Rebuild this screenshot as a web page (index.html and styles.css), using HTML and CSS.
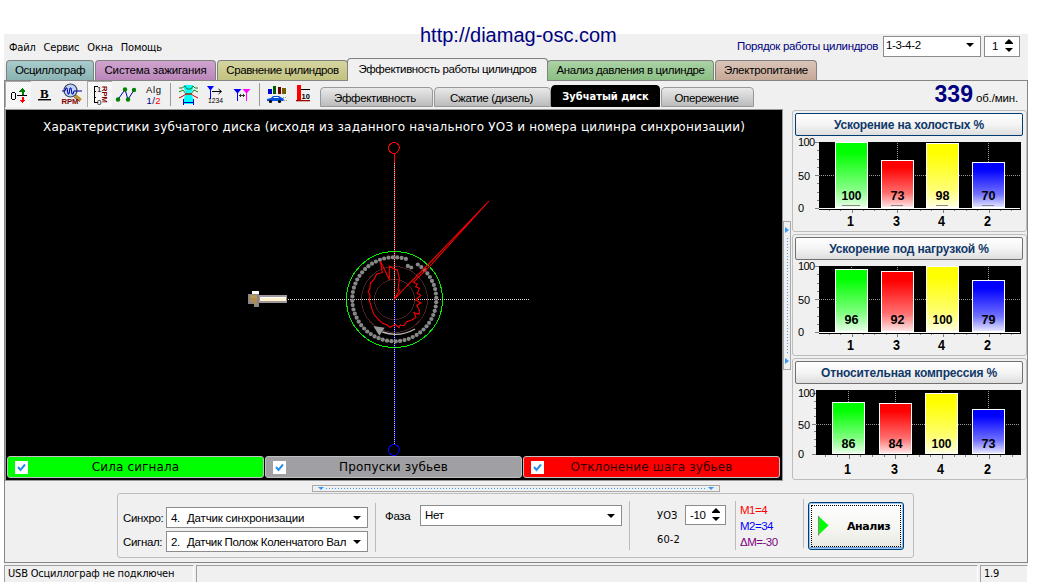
FILE: index.html
```html
<!DOCTYPE html>
<html lang="ru">
<head>
<meta charset="utf-8">
<title>Осциллограф</title>
<link rel="stylesheet" href="styles.css">
</head>
<body>
<div class="site-link">http://diamag-osc.com</div>
<div class="window">
  <header class="menubar">
    <nav class="menu"><span>Файл</span><span>Сервис</span><span>Окна</span><span>Помощь</span></nav>
    <div class="order">
      <span class="order-label">Порядок работы цилиндров</span>
      <div class="select order-select"><span>1-3-4-2</span><i class="caret"></i></div>
      <div class="spinner order-spin"><span>1</span><i class="updown"></i></div>
    </div>
  </header>

  <nav class="tabs">
    <div class="tab teal">Осциллограф</div>
    <div class="tab violet">Система зажигания</div>
    <div class="tab olive">Сравнение цилиндров</div>
    <div class="tab active">Эффективность работы цилиндров</div>
    <div class="tab green">Анализ давления в цилиндре</div>
    <div class="tab brown">Электропитание</div>
  </nav>

  <section class="content">
    <div class="toolbar">
      <svg class="tool pressed" width="26" height="26" viewBox="5 81 26 26" shape-rendering="crispEdges">
        <path d="M12 92h3v1h-3zM12 99h3v1h-3zM11 93h1v6h-1zM15 93h1v6h-1z"/>
        <path d="M17 95h10v1H17z" fill="#000"/>
        <path d="M22.500 88l3 3.500h-2V95h-2v-3.500h-2z" fill="#008000"/><path d="M22.500 103l3-3.500h-2V97h-2v2.500h-2z" fill="#f00"/>
      </svg>
      <svg class="tool" width="27" height="26" viewBox="31 81 27 26">
        <text x="40" y="97.500" class="ico-b">B</text><path d="M38 99h13v1.400H38z"/>
      </svg>
      <svg class="tool" width="29" height="26" viewBox="58 81 29 26">
        <path d="M75 95l6 5" stroke="#c09020" stroke-width="2.600"/><path d="M74 97l6 4.500" stroke="#604000"/>
        <circle cx="70.500" cy="90.500" r="6.500" fill="#b8d4ff" stroke="#445" stroke-width="1.200"/>
        <path d="M62 91h3l1-3h1l1 6h1l1-6h1l1 6h1l1-3h8" fill="none" stroke="#0000a0"/>
        <text x="61.500" y="103.800" class="ico-rpm" textLength="17" lengthAdjust="spacingAndGlyphs">RPM</text>
      </svg>
      <svg class="tool pressed" width="25" height="26" viewBox="87 81 25 26">
        <path d="M98 86.500h-4v16h4M94 91.500h2M94 97.500h2" fill="none" stroke="#000" shape-rendering="crispEdges"/>
        <text x="97" y="92" class="ico-num">1</text><text x="97" y="105" class="ico-num">0</text>
        <text transform="translate(101.500 86) rotate(90)" class="ico-rpm" textLength="17" lengthAdjust="spacingAndGlyphs">RPM</text>
      </svg>
      <svg class="tool" width="28" height="26" viewBox="112 81 28 26">
        <path d="M118 99.500l7-10 3 10 6-9.500" fill="none" stroke="#0000c0"/>
        <g fill="#008000"><circle cx="118" cy="99.500" r="2.200"/><circle cx="125" cy="89.500" r="2.200"/><circle cx="128" cy="99.500" r="2.200"/><circle cx="134" cy="90" r="2.200"/></g>
      </svg>
      <svg class="tool" width="30" height="26" viewBox="140 81 30 26">
        <text x="146" y="93" class="ico-alg" textLength="15">Alg</text>
        <text x="146.500" y="103.500" class="ico-alg navy" textLength="14">1/<tspan class="red">2</tspan></text>
      </svg>
      <svg class="tool" width="34" height="26" viewBox="170 81 34 26">
        <path d="M170.500 83v23" stroke="#999"/>
        <path d="M184 85h9v4l-2 4 2 5v6h-9v-6l2-5-2-4z" fill="#00ffff"/>
        <path d="M179 88h3l3-2 2 3h4l2-3 2 2h3M179 92l4-2 3 4h5l3-4 4 2" fill="none" stroke="#208020"/>
        <path d="M179 98l4-2 3-2h5l3 2 4 2" fill="none" stroke="#d00000"/>
        <path d="M183.500 99v6M193.500 99v6M184 102.500h9" fill="none" stroke="#0000c0"/>
      </svg>
      <svg class="tool" width="27" height="26" viewBox="204 81 27 26">
        <path d="M207 86h7l-3 4v9h-1v-9z" fill="#00f"/>
        <path d="M212 91.500h9M218.500 89l3 2.500-3 2.500" fill="none" stroke="#000"/>
        <text x="208" y="102.500" class="ico-num" textLength="15" lengthAdjust="spacingAndGlyphs">1234</text>
      </svg>
      <svg class="tool" width="28" height="26" viewBox="231 81 28 26">
        <path d="M233.500 89h8l-3.500 4v8h-1v-8z" fill="#00f"/><path d="M242.500 89h8l-3.500 4v8h-1v-8z" fill="#f0f"/>
        <path d="M239.500 95.500h5M241 94l-1.500 1.500L241 97M243 94l1.500 1.500L243 97" fill="none" stroke="#000" stroke-width=".8"/>
      </svg>
      <svg class="tool" width="34" height="26" viewBox="259 81 34 26">
        <path d="M259.500 83v23" stroke="#999"/>
        <g shape-rendering="crispEdges"><path d="M268 89h4v5h-4z" fill="#0000d0"/><path d="M273 86h3v8h-3z" fill="#006000"/><path d="M278 87h3v7h-3z" fill="#700000"/><path d="M282 88h4v6h-4z" fill="#706000"/></g>
        <path d="M267 101v-2l4-1 2-2h6l3 2h1l1 2-1 1z" fill="#0050e0"/><path d="M273 98l1-1h4l1 1z" fill="#fff"/>
        <circle cx="270.500" cy="101.500" r="1.600"/><circle cx="279.500" cy="101.500" r="1.600"/>
        <path d="M283 97.500h4M284 100.500h3" stroke="#999" stroke-dasharray="1 1"/>
      </svg>
      <svg class="tool last" width="27" height="26" viewBox="293 81 27 26">
        <path d="M297 85h4v15h-4z" fill="#f00"/><path d="M296 100h14v1.300h-14z" fill="#a00000"/><path d="M301 89.500h9" stroke="#000"/>
        <text x="301.500" y="98.500" class="ico-ten">10</text>
      </svg>
      <div class="subtabs">
        <div class="subtab w1">Эффективность</div><div class="subtab w2">Сжатие (дизель)</div><div class="subtab current">Зубчатый диск</div><div class="subtab w4">Опережение</div>
      </div>
      <div class="rpm"><b>339</b><span>об./мин.</span></div>
    </div>

    <div class="main">
      <div class="scope">
        <svg class="disk" width="776" height="346" viewBox="6 110 776 346">
          <text x="43" y="131" class="disk-title" textLength="702">Характеристики зубчатого диска (исходя из заданного начального УОЗ и номера цилинра синхронизации)</text>
          <g fill="none" shape-rendering="crispEdges">
            <circle cx="394" cy="148" r="5.300" stroke="#f00"/>
            <circle cx="394" cy="450" r="5.300" stroke="#00f"/>
            <circle cx="394.500" cy="299.500" r="33" stroke="#4a2020"/>
            <circle cx="394.500" cy="299.500" r="20" stroke="#4a2020"/>
            <circle cx="394.500" cy="299.500" r="48" stroke="#00f000"/>
            <path d="M394.500 154v145" stroke="#f00"/><path d="M394.500 299v146" stroke="#00f"/>
            <path d="M394.500 163v282" stroke="#ccc" stroke-dasharray="1 1"/>
            <path d="M288 299.500h242" stroke="#ddd" stroke-dasharray="1 1"/>
          </g>
          <g class="teeth" id="teeth"></g>
          <g transform="translate(330 130) scale(.33333)">
            <path class="deviation" d="M193 508l37-40 63-63L477 213 300 408 250 457l12 5-5 8 11 5-6 15 10 6-15 14 16 9-13 7 8 14-1 13-15-5 6 14-13 8-15 5-8 12-12-2-3 8-11-10-16 9-8-7-14-5-11-10-14-15-8-20-7-25 2-15-6-10 6-10 1-15 11-12 8-16 17-4-6-35 27 56v-41l14 9 10 3 6 25-4 35h5z"/>
            <path d="M255 597q-48 27-98 9" fill="none" stroke="#bbb" stroke-width="4"/>
            <path d="M130 588l34 5-16 24z" fill="#999"/>
          </g>
          <g shape-rendering="crispEdges">
            <path d="M252 291h7v3h-7z" fill="#fff"/>
            <path d="M248 294h11v13h-5v-3h-6z" fill="#88868a"/><path d="M250 295h7v3h-7z" fill="#b49a58"/><path d="M250 298h7v4h-7zM254 302h3v3h-3z" fill="#b08c50"/>
            <path d="M259 295h28v8h-28z" fill="#a09898"/><path d="M260 297h26v4h-26z" fill="#fff2cc"/><path d="M260 297h26v1h-26z" fill="#fff"/>
          </g>
        </svg>
        <div class="legend">
          <div class="legend-item lime"><i class="check"><svg width="13" height="13" viewBox="0 0 13 13"><path d="M3 6l2.500 3L10 3.500" fill="none" stroke="#2a8fe8" stroke-width="2"/></svg></i><span>Сила сигнала</span></div>
          <div class="legend-item gray"><i class="check"><svg width="13" height="13" viewBox="0 0 13 13"><path d="M3 6l2.500 3L10 3.500" fill="none" stroke="#2a8fe8" stroke-width="2"/></svg></i><span>Пропуски зубьев</span></div>
          <div class="legend-item crimson"><i class="check"><svg width="13" height="13" viewBox="0 0 13 13"><path d="M3 6l2.500 3L10 3.500" fill="none" stroke="#2a8fe8" stroke-width="2"/></svg></i><span>Отклонение шага зубьев</span></div>
        </div>
      </div>
      <div class="vsplit"><i class="arrow-right"></i><i class="dots-v"></i><i class="arrow-right"></i></div>
      <aside class="charts" id="charts"></aside>
    </div>

    <div class="hsplit"><i class="arrow-down"></i><i class="dots-h"></i><i class="arrow-down"></i></div>

    <div class="settings">
      <div class="sources">
        <span class="row-label">Синхро:</span><div class="select"><span class="num">4.</span><span class="sync-value">Датчик синхронизации</span><i class="caret"></i></div>
        <span class="row-label">Сигнал:</span><div class="select"><span class="num">2.</span><span>Датчик Полож Коленчатого Вал</span><i class="caret"></i></div>
      </div>
      <div class="phase"><span>Фаза</span><div class="select"><span>Нет</span><i class="caret"></i></div></div>
      <div class="advance"><span class="tahoma">УОЗ</span><div class="spinner"><span>-10</span><i class="updown"></i></div><span class="tahoma">60-2</span></div>
      <div class="marks"><span class="m1">M1=4</span><span class="m2">M2=34</span><span class="dm">ΔM=-30</span></div>
      <div class="run"><button class="analyze"><svg width="11" height="20" viewBox="0 0 11 20"><path d="M.5 0v19.500" stroke="#888" stroke-width="1.500"/><path d="M1 0.500l9.500 9L1 18.500z" fill="#0f0"/></svg><span>Анализ</span></button></div>
    </div>
  </section>

  <footer class="status"><div>USB Осциллограф не подключен</div><div></div><div>1.9</div></footer>
</div>
<script src="app.js"></script>
</body>
</html>
```
FILE: app.js
```js
// Teeth of a 60-2 disk; the two missing teeth sit closer to the centre.
const teeth = [];
for (let i = 0; i < 60; i++) {
  const deg = 4 + i * 6;
  const missing = deg === 22 || deg === 28;
  const r = missing ? 36 : 42;
  const a = deg * Math.PI / 180;
  const x = 394.3 + r * Math.sin(a), y = 299.3 - r * Math.cos(a);
  teeth.push(`<circle cx="${x.toFixed(1)}" cy="${y.toFixed(1)}" r="2.1"/>`);
}
document.getElementById('teeth').innerHTML = teeth.join('');

const colors = [
  ['g', '#00ff00', '#80ff80', '#e8ffe8'],
  ['r', '#ff0000', '#ff7070', '#ffe8e8'],
  ['y', '#ffff00', '#ffff70', '#ffffe0'],
  ['b', '#0000ff', '#7070ff', '#e8e8ff']
];
const order = [1, 3, 4, 2];
// All offsets are relative to the top of the plot.
const charts = [
  { title: 'Ускорение на холостых %', cls: 'focus', values: [100, 73, 98, 70], tops: [0, 18, 1, 20],
    xs: [835, 881, 926, 972], left: 819, height: 66, top100: 0, marks: true, drop: 0 },
  { title: 'Ускорение под нагрузкой %', cls: 'load', values: [96, 92, 100, 79], tops: [3, 5, 0, 14],
    xs: [835, 881, 926, 972], left: 819, height: 66, top100: 0, drop: 0 },
  { title: 'Относительная компрессия %', cls: 'comp', values: [86, 84, 100, 73], tops: [12, 13, 3, 19],
    xs: [832, 879, 925, 972], left: 816, height: 64, top100: 3, drop: 2 }
];

document.getElementById('charts').innerHTML = charts.map((c, n) => {
  const H = c.height, mid = Math.round((H + c.top100) / 2) + 0.5;
  let s = `<rect x="${c.left}" y="0" width="${1021 - c.left}" height="${H + 1}"/>`;
  s += `<path d="M${c.left} ${mid}H1020" class="grid"/>`;
  c.xs.forEach(x => { s += `<path d="M${x + 16.5} 1V${H}" class="grid"/>`; });
  for (let k = 0; k <= 8; k++) {
    const y = Math.round(c.top100 + (H - c.top100) * k / 8) + 0.5;
    const w = k % 4 ? 2 : 4;
    s += `<path d="M${c.left - w} ${y}h${w}" class="tick"/>`;
  }
  for (let k = -2; k <= 14; k++) {
    const x = c.xs[0] + 16.5 + k * (c.xs[3] - c.xs[0]) / 12;
    if (x < c.left + 6 || x > 1015) continue;
    s += `<path d="M${Math.round(x) + 0.5} ${H + 1}v${k % 4 ? 2 : 4}" class="tick"/>`;
  }
  c.xs.forEach((x, i) => {
    s += `<rect x="${x + 0.5}" y="${c.tops[i] + 0.5}" width="32" height="${H - c.tops[i] - 1}" fill="url(#${colors[i][0]}${n})" stroke="#fff"/>`;
    if (c.marks) s += `<path d="M${x + (i ? 10 : 7)} 63.5h${i ? 12 : 18}" class="mark"/>`;
    const w = c.values[i] === 100 ? 20 : 14;
    s += `<text x="${x + 16.5 - w / 2}" y="${H - 8.5 + c.drop}" class="value" textLength="${w}" lengthAdjust="spacingAndGlyphs">${c.values[i]}</text>`;
    s += `<text x="${x + 12}" y="${H + 17.5 + c.drop}" class="cyl" textLength="7" lengthAdjust="spacingAndGlyphs">${order[i]}</text>`;
  });
  if (n < 2) s += `<path d="M${c.left} ${H}.5H1020" stroke="#fff"/><path d="M${c.left} ${H + 1.5}H1021" stroke="#000"/>`;
  s += `<text x="798" y="${c.top100 + 4}" class="axis" textLength="17">100</text><text x="798" y="${mid + 4}" class="axis" textLength="12">50</text><text x="798" y="${H + 4}" class="axis">0</text>`;
  const defs = colors.map(([id, a, b, d]) => `<linearGradient id="${id}${n}" x2="0" y2="1"><stop offset=".15" stop-color="${a}"/><stop offset=".7" stop-color="${b}"/><stop offset="1" stop-color="${d}"/></linearGradient>`).join('');
  return `<section class="chart ${c.cls}"><h2>${c.title}</h2><svg width="230" height="92" viewBox="794 -6 230 92" shape-rendering="crispEdges"><defs>${defs}</defs>${s}</svg></section>`;
}).join('');
```
FILE: styles.css
```css
* { box-sizing: border-box; }
body { margin: 0; background: #fff; overflow: hidden; font: 11.5px "Liberation Sans", Arial, sans-serif; letter-spacing: -.34px; color: #000; }
.site-link { position: absolute; left: 420px; top: 24px; font-size: 20px; line-height: 23px; letter-spacing: 0; color: #000080; z-index: 2; }
.window { margin: 34px 0 0 4px; width: 1024px; height: 548px; background: #f0f0f0; display: flex; flex-direction: column; }

.menubar { height: 26px; padding: 1px 9px 0 5px; display: flex; justify-content: space-between; align-items: flex-start; flex: none; }
.menu { display: flex; gap: 8px; font: 11px/25px "DejaVu Sans Condensed", "DejaVu Sans", sans-serif; font-stretch: condensed; letter-spacing: -.2px; }
.order { display: flex; align-items: center; }
.order-label { color: #000080; margin-right: 5px; letter-spacing: -.33px; line-height: 22px; }
.select, .spinner { height: 21px; background: #fff; border: 1px solid #8c8c8c; display: flex; align-items: center; justify-content: space-between; padding: 0 6px 0 4px; line-height: 18px; white-space: nowrap; }
.order-select { width: 98px; margin-right: 3px; padding: 0 6px 2px 2px; }
.order-spin { width: 36px; padding-left: 7px; margin-right: -1px; }
.caret { border: 4px solid transparent; border-top-color: #000; border-bottom: 0; }
.updown { width: 8px; height: 14px; background: #000; clip-path: polygon(50% 0, 100% 4px, 100% 5px, 0 5px, 0 4px, 50% 0, 0 9px, 0 9px, 100% 9px, 50% 13px, 0 9px); }

.tabs { height: 20px; padding-left: 2px; display: flex; align-items: flex-end; flex: none; }
.tab { height: 20px; border: 1px solid #808080; border-bottom: 0; border-radius: 4px 4px 0 0; text-align: center; line-height: 19px; margin-right: 1px; white-space: nowrap; }
.teal { width: 88px; background: linear-gradient(#a9cbcb, #8bb3b3); letter-spacing: -.37px; }
.violet { width: 121px; background: linear-gradient(#d0a5cf, #bb86ba); letter-spacing: -.15px; }
.olive { width: 131px; background: linear-gradient(#d5d5a0, #c2c280); margin-right: -1px; letter-spacing: -.43px; }
.active { width: 201px; height: 23px; margin-bottom: -1px; background: #f0f0f0; line-height: 21px; margin-right: -1px; z-index: 1; letter-spacing: -.39px; }
.green { width: 167px; background: linear-gradient(#abd2a5, #8bbf84); letter-spacing: -.36px; }
.brown { width: 102px; background: linear-gradient(#dac5b9, #c6a896); letter-spacing: -.26px; }

.content { height: 483px; border: 1px solid #868686; flex: none; }
.toolbar { height: 28px; display: flex; align-items: flex-start; }
.tool { display: block; flex: none; letter-spacing: 0; }
.pressed { background: repeating-conic-gradient(#fff 0 25%, #efefef 0 50%) 0 0 / 2px 2px; box-shadow: inset 1px 1px #aaa; }
.last { margin-right: -5px; }
.ico-b { font: bold 13px "Liberation Serif", serif; }
.ico-rpm { font: bold 7px "Liberation Sans", sans-serif; fill: #800000; }
.ico-num { font: 8px "Liberation Sans", sans-serif; }
.ico-alg { font: 9.5px "Liberation Sans", sans-serif; }
.navy { fill: #000080; }
.red { fill: #f00; }
.ico-ten { font: bold 7.5px "Liberation Sans", sans-serif; }
.subtabs { display: flex; align-items: flex-end; height: 26px; margin-left: 5px; }
.subtab { height: 20px; border: 1px solid #999; border-radius: 4px 4px 0 0; text-align: center; line-height: 20px; background: linear-gradient(#e9e9e9, #bcbcbc); margin-right: 1px; }
.w1 { width: 113px; padding-right: 3px; }
.w2 { width: 117px; margin-right: 0; padding-right: 2px; }
.w4 { width: 93px; padding-right: 2px; }
.current { width: 109px; height: 22px; background: #000; color: #fff; border-color: #000; font: bold 11px/22px "DejaVu Sans Condensed", "DejaVu Sans", sans-serif; letter-spacing: 0; }
.rpm { margin-left: auto; padding-right: 9px; display: flex; align-items: baseline; gap: 3px; line-height: 27px; letter-spacing: -.15px; }
.rpm b { font-size: 23px; color: #000080; letter-spacing: 0; }

.main { display: flex; height: 372px; }
.scope { width: 778px; height: 372px; border: 1px solid #999; background: #000; flex: none; }
.disk { display: block; letter-spacing: 0; }
.disk-title { font: 12px "DejaVu Sans", Verdana, sans-serif; fill: #fff; }
.teeth { fill: #888; }
.deviation { fill: none; stroke: #f00; stroke-width: 3.2; }
.legend { display: flex; gap: 1px; padding: 0 1px; }
.legend-item { width: 257px; height: 22px; border: 1px solid #c0c0c0; border-radius: 3px; display: grid; grid-template-columns: 20px 1fr 20px; align-items: center; padding: 0 0 0 7px; font: 12px "DejaVu Sans", Verdana, sans-serif; letter-spacing: .14px; text-align: center; }
.legend-item span { padding-right: 7px; }
.lime { background: #0f0; }
.gray { background: #a0a0a4; }
.crimson { background: #f00; color: #300000; }
.check { width: 13px; height: 13px; background: #fff; display: block; }
.check svg { display: block; }
.vsplit { width: 8px; height: 149px; margin-top: 112px; border: 1px solid #a8a8a8; display: flex; flex-direction: column; align-items: center; justify-content: space-between; padding: 5px 0; flex: none; }
.arrow-right { border: 3px solid transparent; border-left: 4px solid #3399ff; border-right: 0; }
.dots-v { width: 1px; height: 116px; background: repeating-linear-gradient(#3399ff 0 1px, transparent 1px 3px); }
.charts { width: 235px; margin-left: 1px; padding-top: 1px; display: flex; flex-direction: column; gap: 2px; }
.chart { height: 122px; border: 1px solid #bdbdbd; border-radius: 3px; padding: 2px; }
.chart h2 { height: 23px; width: 228px; margin: 0; font: bold 12px/22px "Liberation Sans", Arial, sans-serif; letter-spacing: -.17px; text-align: center; color: #103868; background: linear-gradient(#fff, #f4f4f4 50%, #dedede); border: 1px solid #707070; border-radius: 2px; }
.focus h2 { border-color: #003c74; }
.chart svg { display: block; margin-left: -1px; letter-spacing: 0; overflow: visible; }
.grid { stroke: #999; stroke-dasharray: 1 1; }
.tick { stroke: #808080; }
.mark { stroke: #888; }
.value { font: bold 13px "Liberation Sans", sans-serif; }
.cyl { font: bold 14px "Liberation Sans", sans-serif; }
.axis { font: 11px "Liberation Sans", sans-serif; }

.hsplit { width: 408px; height: 7px; margin: 4px 0 1px 307px; border: 1px solid #a8a8a8; display: flex; align-items: center; justify-content: space-between; padding: 0 5px; }
.arrow-down { border: 3px solid transparent; border-top: 3px solid #3399ff; border-bottom: 0; }
.dots-h { height: 1px; width: 380px; background: repeating-linear-gradient(90deg, #3399ff 0 1px, transparent 1px 3px); }
.settings { width: 797px; height: 65px; margin-left: 112px; border: 1px solid #bdbdbd; border-radius: 3px; display: flex; align-items: flex-start; padding-left: 5px; }
.sources { display: grid; grid-template-columns: 43px 202px; row-gap: 3px; padding: 13px 7px 0 0; line-height: 21px; }
.row-label { line-height: 23px; height: 21px; }
.sources .select { justify-content: flex-start; }
.sources .caret { margin-left: auto; }
.num { width: 16px; }
.sync-value { letter-spacing: -.18px; }
.phase { height: 49px; margin-top: 9px; width: 254px; border-left: 1px solid #bbb; padding: 2px 0 0 9px; display: flex; }
.phase span { width: 35px; line-height: 23px; }
.phase .select { width: 202px; }
.phase .select span { line-height: 19px; }
.advance { height: 49px; margin-top: 7px; width: 106px; border-left: 1px solid #bbb; padding: 4px 0 0 27px; display: grid; grid-template-columns: 28px 41px; grid-template-rows: 20px 28px; }
.advance span { line-height: 22px; }
.advance > span:last-child { line-height: 30px; }
.advance .spinner { height: 20px; padding: 0 5px 0 4px; }
.advance .spinner span { line-height: 18px; }
.tahoma { font: 11px "DejaVu Sans Condensed", "DejaVu Sans", sans-serif; letter-spacing: .1px; }
.marks { height: 49px; margin-top: 7px; width: 68px; border-left: 1px solid #bbb; padding: 1px 0 0 4px; display: flex; flex-direction: column; line-height: 16px; letter-spacing: -.5px; }
.m1 { color: #f00; }
.m2 { color: #00f; }
.dm { color: #800080; }
.run { height: 49px; margin-top: 5px; border-left: 1px solid #bbb; padding: 3px 0 0 4px; }
.analyze { display: flex; align-items: center; width: 96px; height: 48px; padding: 0 0 0 9px; border: 1px solid #003c74; border-radius: 3px; background: linear-gradient(#fff, #f4f4f0 60%, #e8e8e0); box-shadow: inset 0 0 0 1px #9cc4f0, inset 0 -2px 0 #6ea0e0; outline: 1px dotted #000; outline-offset: -4px; font: bold 11px "DejaVu Sans", Verdana, sans-serif; letter-spacing: -.4px; color: #000; }
.analyze span { margin-left: 18px; }

.status { margin-top: 2px; display: grid; grid-template-columns: 190px 782px 48px; gap: 2px; height: 17px; font: 11px/16px "DejaVu Sans Condensed", "DejaVu Sans", sans-serif; letter-spacing: -.2px; }
.status div { border-left: 1px solid #a0a0a0; border-top: 1px solid #a0a0a0; border-right: 1px solid #fff; padding-left: 3px; white-space: nowrap; }
```
